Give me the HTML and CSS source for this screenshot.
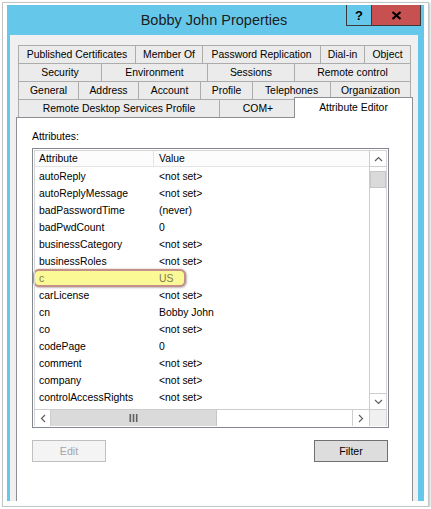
FILE: index.html
```html
<!DOCTYPE html>
<html>
<head>
<meta charset="utf-8">
<link rel="stylesheet" href="styles.css">
</head>
<body>
<div class="shot">
  <div class="window">
    <div class="titlebar">
      <div></div>
      <div class="title">Bobby John Properties</div>
      <div class="caps">
        <div class="cap help">?</div>
        <div class="cap close">
          <svg width="11" height="9" viewBox="0 0 11 9"><path d="M1.5 1 L9.5 8 M9.5 1 L1.5 8" stroke="#000" stroke-width="2.2" fill="none"/></svg>
        </div>
      </div>
    </div>
    <div class="body">
      <div class="panel">
        <div class="tabs">
          <div class="row">
            <div class="tab w117">Published Certificates</div>
            <div class="tab w67">Member Of</div>
            <div class="tab w118">Password Replication</div>
            <div class="tab w44">Dial-in</div>
            <div class="tab w47 last">Object</div>
          </div>
          <div class="row">
            <div class="tab w83">Security</div>
            <div class="tab w106">Environment</div>
            <div class="tab w87">Sessions</div>
            <div class="tab w117 last">Remote control</div>
          </div>
          <div class="row">
            <div class="tab w60">General</div>
            <div class="tab w60">Address</div>
            <div class="tab w62">Account</div>
            <div class="tab w52">Profile</div>
            <div class="tab w78">Telephones</div>
            <div class="tab w81 last">Organization</div>
          </div>
          <div class="row">
            <div class="tab w201">Remote Desktop Services Profile</div>
            <div class="tab w77">COM+</div>
            <div class="tab selected">Attribute Editor</div>
          </div>
        </div>
        <div class="page">
          <div class="label">Attributes:</div>
          <div class="list">
            <div class="mark"></div>
            <div class="list-inner">
              <div class="main">
                <div class="header">
                  <div class="c1">Attribute</div>
                  <div class="c2">Value</div>
                </div>
                <div class="rows">
                  <div class="r"><span class="c1">autoReply</span><span class="c2">&lt;not set&gt;</span></div>
                  <div class="r"><span class="c1">autoReplyMessage</span><span class="c2">&lt;not set&gt;</span></div>
                  <div class="r"><span class="c1">badPasswordTime</span><span class="c2">(never)</span></div>
                  <div class="r"><span class="c1">badPwdCount</span><span class="c2">0</span></div>
                  <div class="r"><span class="c1">businessCategory</span><span class="c2">&lt;not set&gt;</span></div>
                  <div class="r"><span class="c1">businessRoles</span><span class="c2">&lt;not set&gt;</span></div>
                  <div class="r hl"><span class="c1">c</span><span class="c2">US</span></div>
                  <div class="r"><span class="c1">carLicense</span><span class="c2">&lt;not set&gt;</span></div>
                  <div class="r"><span class="c1">cn</span><span class="c2">Bobby John</span></div>
                  <div class="r"><span class="c1">co</span><span class="c2">&lt;not set&gt;</span></div>
                  <div class="r"><span class="c1">codePage</span><span class="c2">0</span></div>
                  <div class="r"><span class="c1">comment</span><span class="c2">&lt;not set&gt;</span></div>
                  <div class="r"><span class="c1">company</span><span class="c2">&lt;not set&gt;</span></div>
                  <div class="r"><span class="c1">controlAccessRights</span><span class="c2">&lt;not set&gt;</span></div>
                </div>
              </div>
              <div class="vscroll">
                <div class="sbtn up"><svg width="9" height="6" viewBox="0 0 9 6"><path d="M1 5 L4.5 1.5 L8 5" stroke="#606060" stroke-width="1.2" fill="none"/></svg></div>
                <div class="vthumb"></div>
                <div class="vtrack"></div>
                <div class="sbtn down"><svg width="9" height="6" viewBox="0 0 9 6"><path d="M1 1 L4.5 4.5 L8 1" stroke="#606060" stroke-width="1.2" fill="none"/></svg></div>
              </div>
              <div class="hscroll">
                <div class="hbtn left"><svg width="6" height="9" viewBox="0 0 6 9"><path d="M5 1 L1.5 4.5 L5 8" stroke="#606060" stroke-width="1.2" fill="none"/></svg></div>
                <div class="hthumb"><svg width="9" height="8" viewBox="0 0 9 8"><rect x="0.5" y="0" width="1.6" height="8" fill="#606060"/><rect x="3.7" y="0" width="1.6" height="8" fill="#606060"/><rect x="6.9" y="0" width="1.6" height="8" fill="#606060"/></svg></div>
                <div class="htrack"></div>
                <div class="hbtn right"><svg width="6" height="9" viewBox="0 0 6 9"><path d="M1 1 L4.5 4.5 L1 8" stroke="#606060" stroke-width="1.2" fill="none"/></svg></div>
              </div>
              <div class="corner"></div>
            </div>
          </div>
          <div class="buttons">
            <div class="btn disabled">Edit</div>
            <div class="btn filter">Filter</div>
          </div>
        </div>
      </div>
    </div>
  </div>
</div>
</body>
</html>
```

FILE: styles.css
```css
* { box-sizing: border-box; }
body {
  margin: 0;
  background: #ffffff;
  font-family: "Liberation Sans", Arial, sans-serif;
  font-size: 10.4px;
  color: #000;
}
.shot {
  width: 427px;
  height: 505px;
  margin: 2px 0 0 2px;
  border: 1px solid #c4c4c4;
  box-shadow: 1px 1px 2px rgba(0,0,0,0.25);
  padding: 2px 0 0 4px;
  overflow: hidden;
  background: #fff;
}
.window {
  width: 417px;
  height: 496px;
  background: #65c8eb;
  display: flex;
  flex-direction: column;
}
.titlebar {
  height: 30px;
  flex: none;
  display: grid;
  grid-template-columns: 78px 1fr 78px;
}
.title {
  font-size: 14.5px;
  line-height: 30px;
  text-align: center;
  color: #1c1c1c;
  padding-right: 3px;
}
.caps {
  justify-self: end;
  align-self: start;
  margin-right: 3px;
  display: flex;
  height: 21px;
  border: 1px solid #3a3a3a;
  border-top: none;
}
.cap {
  display: flex;
  align-items: center;
  justify-content: center;
  height: 20px;
}
.help {
  width: 25px;
  border-right: 1px solid #3a3a3a;
  font-weight: bold;
  font-size: 13px;
}
.close {
  width: 48px;
  background: #c75050;
}
.body {
  flex: 1;
  padding: 0 6px 0 3px;
  min-height: 0;
}
.panel {
  height: 100%;
  background: #f0f0f0;
  padding: 10px 5px 0 6px;
  display: flex;
  flex-direction: column;
  overflow: hidden;
}
.tabs {
  flex: none;
  padding: 0 2px;
}
.row {
  display: flex;
  height: 18px;
}
.tab {
  height: 18px;
  border-top: 1px solid #acacac;
  border-left: 1px solid #acacac;
  background: #ebebeb;
  display: flex;
  align-items: center;
  justify-content: center;
  white-space: nowrap;
  flex: none;
}
.tab.last { border-right: 1px solid #acacac; }
.w44 { width: 44px; } .w47 { width: 47px; } .w52 { width: 52px; }
.w60 { width: 60px; } .w62 { width: 62px; } .w67 { width: 67px; }
.w77 { width: 77px; } .w78 { width: 78px; } .w81 { width: 81px; }
.w83 { width: 83px; } .w87 { width: 87px; } .w106 { width: 106px; }
.w117 { width: 117px; } .w118 { width: 118px; } .w201 { width: 201px; }
.tab.selected {
  width: 119px;
  height: 21px;
  margin: -2px -2px 0 -2px;
  background: #fff;
  border: 1px solid #8c8e94;
  border-bottom: none;
  position: relative;
  z-index: 1;
  padding-bottom: 1px;
}
.page {
  flex: 1;
  width: 397px;
  background: #fff;
  border: 1px solid #8c8e94;
  border-bottom: none;
  padding: 13px 0 0 15px;
}
.label {
  line-height: 12px;
  height: 12px;
}
.list {
  position: relative;
  margin-top: 5px;
  width: 357px;
  height: 280px;
  border: 1px solid #828790;
  padding: 1px;
  background: #fff;
}
.list-inner {
  position: relative;
  z-index: 1;
  height: 100%;
  border: 1px solid #d5d5d5;
  display: grid;
  grid-template-columns: 334px 17px;
  grid-template-rows: 258px 17px;
}
.main { overflow: hidden; }
.header {
  display: grid;
  grid-template-columns: 119px 1fr;
  height: 16px;
  background: #fcfcfc;
  border-bottom: 1px solid #e5e5e5;
  line-height: 15px;
}
.header .c1 { border-right: 1px solid #e5e5e5; padding-left: 4px; }
.header .c2 { padding-left: 5px; }
.rows { padding-top: 1px; }
.r {
  display: grid;
  grid-template-columns: 119px 1fr;
  height: 17px;
  line-height: 17px;
  white-space: nowrap;
}
.r .c1 { padding-left: 4px; }
.r .c2 { padding-left: 5px; }
.r.hl { color: #7c7a52; }
.vscroll {
  border-left: 1px solid #cdcdcd;
  display: flex;
  flex-direction: column;
  background: #fff;
}
.sbtn {
  height: 16px;
  display: flex;
  align-items: center;
  justify-content: center;
  flex: none;
}
.sbtn.up { border-bottom: 1px solid #cdcdcd; }
.sbtn.down { border-top: 1px solid #cdcdcd; }
.vthumb {
  margin-top: 4px;
  height: 17px;
  background: #dadada;
  border: 1px solid #c6c6c6;
  flex: none;
}
.vtrack { flex: 1; }
.hscroll {
  border-top: 1px solid #cdcdcd;
  display: flex;
  background: #fff;
}
.hbtn {
  width: 16px;
  display: flex;
  align-items: center;
  justify-content: center;
  flex: none;
}
.hbtn.left { border-right: 1px solid #cdcdcd; }
.hbtn.right { width: 17px; border-left: 1px solid #cdcdcd; }
.hthumb {
  width: 166px;
  background: #dadada;
  border-right: 1px solid #c6c6c6;
  display: flex;
  align-items: center;
  justify-content: center;
  flex: none;
}
.htrack { flex: 1; }
.corner {
  background: #f0f0f0;
  border-top: 1px solid #cdcdcd;
  border-left: 1px solid #cdcdcd;
}
.mark {
  position: absolute;
  z-index: 0;
  left: 0;
  top: 120px;
  width: 153px;
  height: 18px;
  border: 2px solid #c4908a;
  border-radius: 6px;
  background: #fbf995;
  box-shadow: 0 0 2px rgba(150, 80, 80, 0.45), 1px 1px 2px rgba(0,0,0,0.2);
}
.buttons {
  margin-top: 12px;
  width: 356px;
  display: flex;
  justify-content: space-between;
}
.btn {
  width: 74px;
  height: 22px;
  display: flex;
  align-items: center;
  justify-content: center;
  font-size: 10.6px;
}
.btn.disabled {
  background: #f4f4f4;
  border: 1px solid #bfbfbf;
  color: #a3a3a8;
}
.btn.filter {
  background: #dddddd;
  border: 1px solid #707070;
}
```
